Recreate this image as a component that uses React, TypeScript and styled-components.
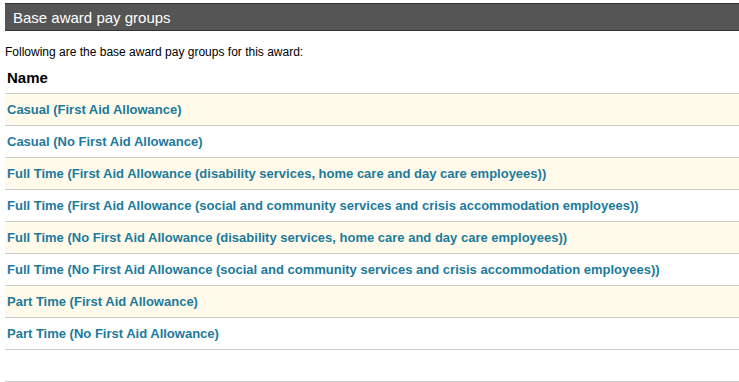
import React from 'react';
import styled, { createGlobalStyle } from 'styled-components';

const GlobalStyle = createGlobalStyle`
  body {
    margin: 0;
    background: #fff;
    font-family: 'Liberation Sans', Arial, sans-serif;
    overflow: hidden;
  }
`;

// Page wrapper
const Page = styled.div`
  padding: 3px 0 0 5px;
  width: 734px;
`;

// Dark section title bar
const TitleBar = styled.div`
  background: #555555;
  border-top: 1px solid #333333;
  border-bottom: 1px solid #333333;
  height: 26px;
  display: flex;
  align-items: center;
  padding-left: 8px;
  color: #ffffff;
  font-size: 15px;
`;

const Intro = styled.p`
  margin: 13px 0 0 0;
  font-size: 12px;
  line-height: 16px;
  color: #000;
`;

const Table = styled.div`
  margin-top: 2px;
  display: flex;
  flex-direction: column;
`;

const HeadCell = styled.div`
  height: 32px;
  display: flex;
  align-items: center;
  padding-left: 2px;
  font-size: 15px;
  font-weight: bold;
  color: #000;
  border-bottom: 1px solid #cccccc;
  box-sizing: border-box;
`;

const Row = styled.div<{ $alt: boolean }>`
  height: 32px;
  display: flex;
  align-items: center;
  padding: 0 0 1px 2px;
  box-sizing: border-box;
  border-bottom: 1px solid #cccccc;
  background: ${p => (p.$alt ? '#fffaea' : '#ffffff')};
`;

const GroupLink = styled.a`
  font-size: 13px;
  font-weight: bold;
  color: #1c7a9b;
  text-decoration: none;
  cursor: pointer;
`;

const groups = [
  'Casual (First Aid Allowance)',
  'Casual (No First Aid Allowance)',
  'Full Time (First Aid Allowance (disability services, home care and day care employees))',
  'Full Time (First Aid Allowance (social and community services and crisis accommodation employees))',
  'Full Time (No First Aid Allowance (disability services, home care and day care employees))',
  'Full Time (No First Aid Allowance (social and community services and crisis accommodation employees))',
  'Part Time (First Aid Allowance)',
  'Part Time (No First Aid Allowance)',
];

const App: React.FC = () => {
  return (
    <Page>
      <GlobalStyle />
      <TitleBar>Base award pay groups</TitleBar>
      <Intro>Following are the base award pay groups for this award:</Intro>
      <Table>
        <HeadCell>Name</HeadCell>
        {groups.map((g, i) => (
          <Row key={g} $alt={i % 2 === 0}>
            <GroupLink>{g}</GroupLink>
          </Row>
        ))}
        <Row $alt={false} />
      </Table>
    </Page>
  );
};

export default App;
